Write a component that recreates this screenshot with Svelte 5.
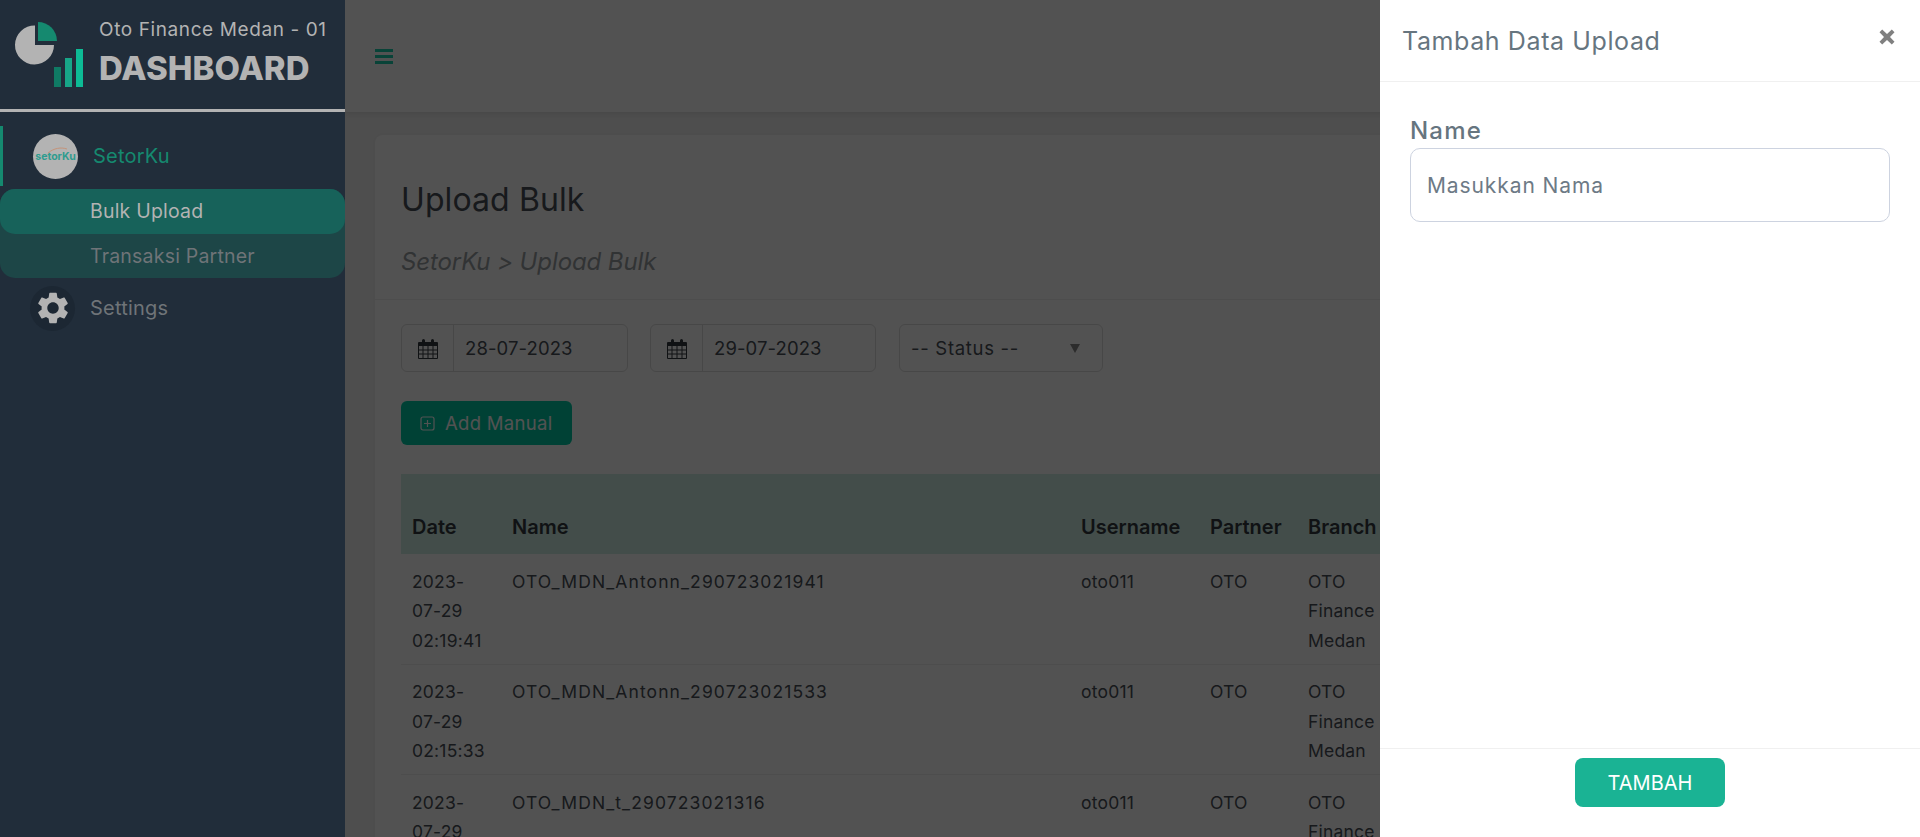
<script>
  const rows = [
    { date: ['2023-', '07-29', '02:19:41'], name: 'OTO_MDN_Antonn_290723021941' },
    { date: ['2023-', '07-29', '02:15:33'], name: 'OTO_MDN_Antonn_290723021533' },
    { date: ['2023-', '07-29', '02:13:16'], name: 'OTO_MDN_t_290723021316' },
  ]
  const filters = ['28-07-2023', '29-07-2023']
</script>

<div class="app">
  <aside class="sidebar">
    <div class="brand">
      <svg class="brand-logo" width="90" height="92" viewBox="0 0 90 92">
        <path d="M35 25.500 A19.500 19.500 0 1 0 54 45 L35 45 Z" fill="#b3b3b3" />
        <path d="M38 22 A19 19 0 0 1 57 41 L38 41 Z" fill="#15896f" />
        <rect x="54" y="67" width="7" height="20" fill="#0f7a64" />
        <rect x="65" y="58" width="7" height="29" fill="#17a688" />
        <rect x="76" y="49" width="7" height="38" fill="#0dbb95" />
      </svg>
      <div class="brand-text">
        <div class="branch">Oto Finance Medan - 01</div>
        <div class="title">DASHBOARD</div>
      </div>
    </div>

    <nav class="menu">
      <div class="menu-item active">
        <span class="avatar">
          <span>setorKu</span>
          <svg class="swoosh" width="22" height="8" viewBox="0 0 22 8" fill="none"><path d="M1 7C7 2 14 1 20 3" stroke="#c98a6a" stroke-width="0.8" /></svg>
        </span>
        <span class="menu-label">SetorKu</span>
      </div>
      <div class="submenu">
        <div class="sub-item current">Bulk Upload</div>
        <div class="sub-item">Transaksi Partner</div>
      </div>
      <div class="menu-item settings">
        <span class="gear">
          <svg width="38" height="38" viewBox="0 0 24 24"><path fill="#b3b3b3" d="M19.14 12.94c.04-.3.06-.61.06-.94 0-.32-.02-.64-.07-.94l2.03-1.58c.18-.14.23-.41.12-.61l-1.92-3.32c-.12-.22-.37-.29-.59-.22l-2.39.96c-.5-.38-1.03-.7-1.62-.94l-.36-2.54c-.04-.24-.24-.41-.48-.41h-3.84c-.24 0-.43.17-.47.41l-.36 2.54c-.59.24-1.13.57-1.62.94l-2.39-.96c-.22-.08-.47 0-.59.22L2.74 8.87c-.12.21-.08.47.12.61l2.03 1.58c-.05.3-.09.63-.09.94s.02.64.07.94l-2.03 1.58c-.18.14-.23.41-.12.61l1.92 3.32c.12.22.37.29.59.22l2.39-.96c.5.38 1.03.7 1.62.94l.36 2.54c.05.24.24.41.48.41h3.84c.24 0 .44-.17.47-.41l.36-2.54c.59-.24 1.13-.56 1.62-.94l2.39.96c.22.08.47 0 .59-.22l1.92-3.32c.12-.22.07-.47-.12-.61l-2.01-1.58zM12 15.6c-1.98 0-3.6-1.62-3.6-3.6s1.62-3.6 3.6-3.6 3.6 1.62 3.6 3.6-1.62 3.6-3.6 3.6z" /></svg>
        </span>
        <span class="menu-label muted">Settings</span>
      </div>
    </nav>
  </aside>

  <main class="main">
    <header class="navbar">
      <span class="burger"><i></i><i></i><i></i></span>
    </header>

    <section class="card">
      <div class="card-head">
        <h1>Upload Bulk</h1>
        <p>SetorKu &gt; Upload Bulk</p>
      </div>

      <div class="filters">
        {#each filters as value}
          <div class="date-group">
            <span class="addon">
              <svg width="20" height="21" viewBox="0 0 20 21">
                <path fill="#343a40" d="M1 4h3V2.500a1.500 1.500 0 0 1 3 0V4h6V2.500a1.500 1.500 0 0 1 3 0V4h3a1 1 0 0 1 1 1v3H0V5a1 1 0 0 1 1-1z" />
                <path stroke="#343a40" stroke-width="1" fill="none" d="M.5 8v12.500h19V8M.5 12h19M.5 16h19M5 8v12M10 8v12M15 8v12" />
              </svg>
            </span>
            <span class="date-value">{value}</span>
          </div>
        {/each}
        <div class="status">
          <span>-- Status --</span>
          <span class="caret"></span>
        </div>
      </div>

      <button class="add-btn">
        <svg width="15" height="15" viewBox="0 0 15 15" fill="none" stroke="currentColor" stroke-width="1.2"><rect x="1" y="1" width="13" height="13" rx="2" /><path d="M7.500 4v7M4 7.500h7" /></svg>
        Add Manual
      </button>

      <table class="grid">
        <colgroup>
          <col style="width:100px" /><col style="width:569px" /><col style="width:129px" /><col style="width:98px" /><col style="width:604px" />
        </colgroup>
        <thead>
          <tr><th>Date</th><th>Name</th><th>Username</th><th>Partner</th><th>Branch</th></tr>
        </thead>
        <tbody>
          {#each rows as row}
            <tr>
              <td>{#each row.date as part}<div>{part}</div>{/each}</td>
              <td class="file-name">{row.name}</td>
              <td>oto011</td>
              <td>OTO</td>
              <td><div>OTO</div><div>Finance</div><div>Medan</div></td>
            </tr>
          {/each}
        </tbody>
      </table>
    </section>
  </main>

  <div class="overlay"></div>

  <div class="drawer">
    <div class="drawer-head">
      <span class="drawer-title">Tambah Data Upload</span>
      <svg class="close" width="16" height="16" viewBox="0 0 16 16"><path d="M3.200 .5 8 5l4.800-4.500L15.500 3.200 11 8l4.500 4.800-2.700 2.700L8 11l-4.800 4.500L.5 12.800 5 8 .5 3.200z" fill="#808080" /></svg>
    </div>
    <div class="drawer-body">
      <label for="nama">Name</label>
      <input id="nama" type="text" placeholder="Masukkan Nama" />
    </div>
    <div class="drawer-foot">
      <button class="submit">TAMBAH</button>
    </div>
  </div>
</div>

<style>
  :global(body) {
    margin: 0;
    overflow: hidden;
    font-family: Inter, "Noto Sans", sans-serif;
  }

  .app {
    display: flex;
    height: 837px;
    overflow: hidden;
    background: #f3f3f3;
  }

  .sidebar {
    position: relative;
    z-index: 3;
    width: 345px;
    flex: none;
    background: #212d3a;
  }

  .brand {
    display: flex;
    height: 109px;
    border-bottom: 3px solid #b3b3b3;
  }

  .brand-logo { flex: none; }

  .brand-text { margin: 17px 0 0 9px; }

  .branch {
    color: #b3b3b3;
    font-size: 19px;
    line-height: 25px;
    letter-spacing: 0.6px;
    white-space: nowrap;
  }

  .title {
    margin-top: 4px;
    color: #b3b3b3;
    font-size: 33px;
    font-weight: 800;
    line-height: 44px;
  }

  .menu { padding-top: 14px; }

  .menu-item {
    display: flex;
    align-items: center;
    height: 60px;
    color: #b3b3b3;
  }

  .menu-item.active { border-left: 3px solid #15896f; }

  .avatar {
    position: relative;
    display: flex;
    align-items: center;
    justify-content: center;
    width: 45px;
    height: 45px;
    margin-left: 30px;
    border-radius: 50%;
    background: #b3b3b3;
    color: #2f9c8f;
    font-size: 10.500px;
    font-weight: 700;
  }

  .swoosh {
    position: absolute;
    top: 12px;
    left: 14px;
  }

  .menu-label {
    margin-left: 15px;
    font-size: 20px;
    letter-spacing: 0.2px;
    color: #15896f;
  }

  .menu-label.muted {
    margin-left: 15px;
    color: #6f7478;
  }

  .submenu {
    margin-top: 3px;
    background: #1d4647;
    border-radius: 15px;
  }

  .sub-item {
    height: 44.500px;
    line-height: 44px;
    padding-left: 90px;
    font-size: 19.500px;
    letter-spacing: 0.2px;
    color: #6f7478;
  }

  .sub-item.current {
    background: #17625a;
    border-radius: 15px;
    color: #b3b3b3;
  }

  .gear {
    display: flex;
    align-items: center;
    justify-content: center;
    width: 45px;
    height: 45px;
    margin-left: 30px;
    border-radius: 50%;
    background: #1c2733;
  }

  .main {
    flex: 1;
    min-width: 0;
  }

  .navbar {
    display: flex;
    align-items: center;
    height: 113px;
    padding-left: 30px;
    box-sizing: border-box;
    background: #fff;
    border-bottom: 1px solid #e4e4e4;
    box-shadow: 0 2px 6px rgba(0, 0, 0, 0.08);
  }

  .burger {
    display: flex;
    flex-direction: column;
    gap: 3px;
    width: 18px;
  }

  .burger i {
    display: block;
    height: 3px;
    background: #1cd0ae;
  }

  .card {
    margin: 22px 0 0 30px;
    padding: 0 26px;
    width: 1600px;
    background: #fff;
    border-radius: 8px 0 0 0;
    box-shadow: 0 0 6px rgba(0, 0, 0, 0.05);
  }

  .card-head {
    height: 165px;
    box-sizing: border-box;
    margin: 0 -26px;
    padding: 46px 26px 0;
    border-bottom: 1px solid #eee;
  }

  h1 {
    margin: 0;
    font-size: 32px;
    font-weight: 400;
    line-height: 38px;
    letter-spacing: 0.1px;
    color: #495057;
  }

  .card-head p {
    margin: 28px 0 0;
    font-size: 24px;
    font-style: italic;
    line-height: 30px;
    letter-spacing: -0.1px;
    color: #999ea3;
  }

  .filters {
    display: flex;
    margin-top: 24px;
    height: 48px;
  }

  .date-group {
    display: flex;
    width: 227px;
    box-sizing: border-box;
    margin-right: 22px;
    border: 1px solid #ddd;
    border-radius: 6px;
    font-size: 18.500px;
    letter-spacing: 0.1px;
    color: #495057;
  }

  .date-group + .date-group { width: 226px; margin-right: 23px; }

  .addon {
    display: flex;
    align-items: center;
    justify-content: center;
    width: 51px;
    border-right: 1px solid #ddd;
  }

  .date-value {
    align-self: center;
    margin-left: 11px;
  }

  .status {
    display: flex;
    align-items: center;
    justify-content: space-between;
    width: 204px;
    box-sizing: border-box;
    padding: 0 22px 0 11px;
    border: 1px solid #ddd;
    border-radius: 6px;
    font-size: 18.500px;
    letter-spacing: 0.7px;
    color: #495057;
  }

  .caret {
    border-left: 5px solid transparent;
    border-right: 5px solid transparent;
    border-top: 9px solid #888;
  }

  .add-btn {
    display: flex;
    align-items: center;
    gap: 10px;
    width: 171px;
    height: 44px;
    margin-top: 29px;
    padding: 0 0 0 19px;
    border: none;
    border-radius: 6px;
    background: #00cba6;
    color: #fff;
    font: inherit;
    font-size: 18.500px;
    letter-spacing: 0.3px;
  }

  .grid {
    width: 1500px;
    margin-top: 29px;
    table-layout: fixed;
    border-collapse: collapse;
    font-size: 17.500px;
    color: #495057;
  }

  th {
    height: 80px;
    box-sizing: border-box;
    padding: 0 11px 15px;
    vertical-align: bottom;
    text-align: left;
    font-size: 20px;
    font-weight: 600;
    white-space: nowrap;
    background: #d0eee6;
    color: #343a40;
  }

  td {
    padding: 12.500px 11px 8.500px;
    vertical-align: top;
    line-height: 29.500px;
    letter-spacing: 0.2px;
    border-bottom: 1px solid #eee;
  }

  td.file-name { letter-spacing: 1.100px; }

  .overlay {
    position: fixed;
    inset: 0;
    z-index: 2;
    background: rgba(0, 0, 0, 0.68);
  }

  .drawer {
    position: fixed;
    top: 0;
    right: 0;
    bottom: 0;
    z-index: 4;
    display: flex;
    flex-direction: column;
    width: 540px;
    background: #fff;
  }

  .drawer-head {
    display: flex;
    align-items: center;
    justify-content: space-between;
    height: 82px;
    box-sizing: border-box;
    padding: 0 25px 0 22px;
    border-bottom: 1px solid #f0f0f0;
  }

  .drawer-title {
    font-size: 25px;
    letter-spacing: 0.6px;
    color: #66757f;
  }

  .close { margin-top: -8px; }

  .drawer-body {
    flex: 1;
    padding: 32px 30px 0 30px;
  }

  label {
    display: block;
    font-size: 24px;
    font-weight: 500;
    letter-spacing: 1.200px;
    line-height: 34px;
    color: #66757f;
  }

  input {
    display: block;
    width: 100%;
    height: 74px;
    box-sizing: border-box;
    padding: 0 16px;
    border: 1px solid #cdd3e0;
    border-radius: 10px;
    font: inherit;
    font-size: 21px;
    letter-spacing: 0.9px;
  }

  input::placeholder {
    color: #6d7a86;
    opacity: 1;
  }

  .drawer-foot {
    display: flex;
    justify-content: center;
    height: 89px;
    box-sizing: border-box;
    padding-top: 9px;
    border-top: 1px solid #f0f0f0;
  }

  .submit {
    width: 150px;
    height: 49px;
    border: none;
    border-radius: 8px;
    background: #1ab394;
    color: #fff;
    font: inherit;
    font-size: 20px;
  }
</style>
